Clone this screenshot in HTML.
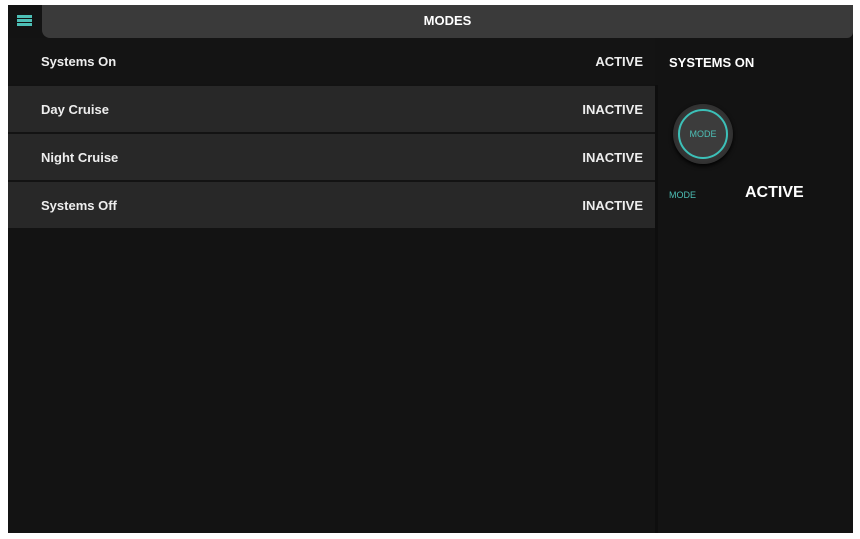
<!DOCTYPE html>
<html><head><style>
body{margin:0;width:860px;height:539px;background:#fff;font-family:"Liberation Sans",sans-serif;overflow:hidden;position:relative}
.app{position:absolute;left:8px;top:5px;width:845px;height:528px;background:#131313}
.hdr{position:absolute;left:34px;top:0;width:811px;height:33px;background:#3a3a3a;border-radius:0 0 6px 8px;color:#fff;font-weight:bold;font-size:13px;text-align:center;line-height:32px}
.ham{position:absolute;left:9px;top:10px;width:15px}
.ham i{display:block;height:3px;background:#4dbfb6;margin-bottom:1px}
.row{position:absolute;left:0;width:647px;height:46px;color:#eee;font-size:13px;font-weight:bold}
.row span{position:absolute;top:16px}
.l{left:33px}.r{right:12px}
.sep{position:absolute;left:647px;top:80px;width:3px;height:448px;background:#0e0e0e}
</style></head><body>
<div class="app">
<div class="ham"><i></i><i></i><i></i></div>
<div class="hdr">MODES</div>
<div class="row" style="top:33px;background:#141414"><span class="l">Systems On</span><span class="r">ACTIVE</span></div>
<div class="row" style="top:81px;background:#282828"><span class="l">Day Cruise</span><span class="r">INACTIVE</span></div>
<div class="row" style="top:129px;background:#282828"><span class="l">Night Cruise</span><span class="r">INACTIVE</span></div>
<div class="row" style="top:177px;background:#282828"><span class="l">Systems Off</span><span class="r">INACTIVE</span></div>
<div class="sep"></div>
<div style="position:absolute;left:661px;top:50px;color:#fff;font-size:13px;font-weight:bold">SYSTEMS ON</div>
<div style="position:absolute;left:665px;top:99px;width:60px;height:60px;border-radius:50%;background:radial-gradient(circle,#3a3a3a 50%,#222 100%);box-shadow:0 2px 4px #000"></div>
<div style="position:absolute;left:670px;top:104px;width:46px;height:46px;border-radius:50%;border:2px solid #3cc0b8;background:#3c3c3c;color:#4dbfb6;font-size:9px;text-align:center;line-height:46px">MODE</div>
<div style="position:absolute;left:661px;top:185px;color:#4dbfb6;font-size:9px">MODE</div>
<div style="position:absolute;left:737px;top:179px;color:#fff;font-size:16px;font-weight:bold">ACTIVE</div>
</div>
</body></html>
